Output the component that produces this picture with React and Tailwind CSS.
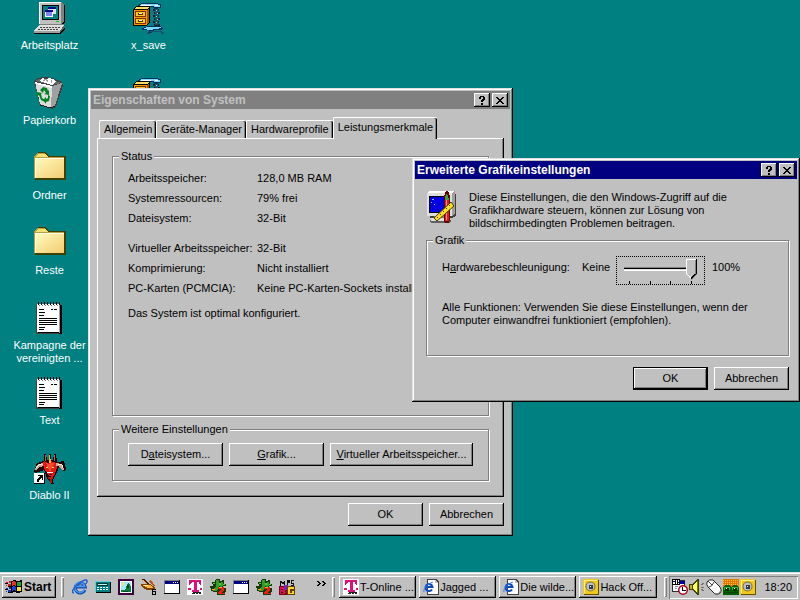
import { useState } from "react";

const raised =
  "shadow-[inset_-1px_-1px_0_#000,inset_1px_1px_0_#fff,inset_-2px_-2px_0_#808080]";
const frame =
  "shadow-[inset_-1px_-1px_0_#000,inset_1px_1px_0_#dfdfdf,inset_-2px_-2px_0_#808080,inset_2px_2px_0_#fff]";

/* ---------- icons ---------- */

function Icon({ size = 32, children }) {
  return (
    <svg
      width={size}
      height={size}
      viewBox={`0 0 ${size} ${size}`}
      shapeRendering="crispEdges"
      className="block shrink-0"
      aria-hidden="true"
    >
      {children}
    </svg>
  );
}

function ComputerIcon() {
  return (
    <Icon>
      <path d="M6 1h22l3 2v18l-4 3H6z" fill="#000" />
      <path d="M5 0h22v22H5z" fill="#c0c0c0" />
      <path d="M27 0l3 2v18l-3 2z" fill="#808080" />
      <path d="M5 0h22v1H6v21H5z" fill="#fff" />
      <path d="M8 3h17v15H8z" fill="#000" />
      <path d="M9 4h15v13H9z" fill="#008080" />
      <path d="M14 5h8v7h-8z" fill="#dfdfff" />
      <path d="M14 5h8v2h-8z" fill="#000080" />
      <path d="M11 8h8v7h-8z" fill="#fff" />
      <path d="M12 10h6v4h-6z" fill="#8080ff" />
      <path d="M11 8h8v2h-8z" fill="#000080" />
      <path d="M22 19h3v1h-3z" fill="#0c0" />
      <path d="M6 22h24v3H6z" fill="#808080" />
      <path d="M5 24h25l1 3-4 5H0v-3z" fill="#000" />
      <path d="M5 23h25l-4 6H0z" fill="#dfdfdf" />
      <path d="M0 29h26v2H0z" fill="#a0a0a0" />
      <path d="M26 29l4-6v3l-4 5z" fill="#606060" />
      <path d="M6 25.500h20M4 27.500h20" stroke="#404040" strokeDasharray="2 1" />
    </Icon>
  );
}

function ZipIcon() {
  return (
    <Icon>
      <path d="M5 3l4-2h13l6 1v4l-6 1-3-2-8 1-6-1z" fill="#003060" />
      <path d="M6 3l4-1h12l5 1v2h-5l-3-1-8 1z" fill="#80d8f8" />
      <path d="M8 3.500h10M22 3.500h3" stroke="#fff" />
      <path d="M0 7l4-3h13v16l-3 4H0z" fill="#000" />
      <path d="M1 7l3-2h12l-2 2z" fill="#ffe060" />
      <path d="M1 8h13v15H1z" fill="#ff9800" />
      <path d="M14 8l2-2v14l-2 3z" fill="#b05000" />
      <path d="M2 9h11v6H2zM2 16h11v6H2z" fill="#803000" />
      <path d="M3 10h9v4H3zM3 17h9v4H3z" fill="#ffc820" />
      <path d="M5 11h5v2H5zM5 18h5v2H5z" fill="#603000" />
      <path d="M6 11h3v1H6zM6 18h3v1H6z" fill="#fff" />
      <path d="M20 7h6v2h-6zM21 10h6v2h-6zM20 13h6v2h-6zM21 16h6v2h-6zM20 19h6v2h-6zM21 22h6v2h-6z" fill="#102838" />
      <path d="M22 7h3v16h-3z" fill="#304c60" />
      <path d="M23 8h1v1h-1zM24 11h1v1h-1zM23 14h1v1h-1zM24 17h1v1h-1zM23 20h1v1h-1z" fill="#a0e0f8" />
      <path d="M9 26l6-2h12l3 2-2 2h-7l-2 3h-4l1-3h-7z" fill="#003060" />
      <path d="M10 26l6-1h11l1 1-4 1-9 1z" fill="#80d8f8" />
      <path d="M15 29h14v1H15zM14 31h3v1h-3zM28 30h3v2h-3z" fill="#205070" />
    </Icon>
  );
}

function BinIcon() {
  return (
    <Icon>
      <path d="M0 4l3-3 7-1 9 1 9 4 1 3-7 22-4 2-12-4z" fill="#404040" />
      <path d="M1 5l17 4-1 22-11-4z" fill="#dcdcdc" />
      <path d="M18 9l10-3-7 23-4 2z" fill="#a0a0a0" />
      <path d="M1 4l4-2 13 1 9 3-9 2z" fill="#686868" />
      <path d="M5 4l3-3 4 1 3-1 4 1 3 3-4 3z" fill="#fff" />
      <path d="M9 4l3-2 2 3M17 3l1 3" fill="none" stroke="#a0a0a0" />
      <path d="M1 5l17 4v2L2 7z" fill="#fff" />
      <path d="M6 28l11 3 4-2" fill="none" stroke="#202020" />
      <g fill="#008020" shapeRendering="auto">
        <path d="M6 13l3-3 4 1 1 3 1-1 0 5-5-1 2-1-2-3-1 3z" />
        <path d="M3 15l5 1-1 1 1 4 3 2v2l-4-2-2-5-2 1z" />
        <path d="M14 18l2 1-1 5-3 1 0 2-3-4 3-3 0 2 2-1z" />
      </g>
    </Icon>
  );
}

function FolderIcon() {
  return (
    <Icon>
      <defs>
        <linearGradient id="folder" x1="0" y1="0" x2="1" y2="1">
          <stop offset="0" stopColor="#fffbc0" />
          <stop offset="1" stopColor="#f4cc70" />
        </linearGradient>
      </defs>
      <path d="M2 2l2-2h8l3 4h16l1 1v23H1V4z" fill="#404000" />
      <path d="M0 5l3-4h8l3 4h16v21H0z" fill="#b8a040" />
      <path d="M1 5l3-3h7l3 3z" fill="#f8e070" />
      <path d="M1 6h29v20H1z" fill="url(#folder)" />
      <path d="M1 6h29v1H2v19H1z" fill="#fffff0" />
    </Icon>
  );
}

function NoteIcon() {
  return (
    <Icon>
      <path d="M4 3h24v29H4z" fill="#000" />
      <path d="M3 2h23v28H3z" fill="#808080" />
      <path d="M3 2h22v28H3z" fill="#fff" />
      <path d="M2 3h1v28h22v1H2z" fill="#404040" />
      <path d="M25 3h1v28h-1z" fill="#a0a0a0" />
      <path d="M4 1.500h22" stroke="#000" strokeWidth="3" strokeDasharray="1 2" />
      <path d="M5 3.500h20" stroke="#808080" strokeDasharray="1 2" />
      <path d="M5 7h5v1H5zM17 7h2v1h-2zM20 7h3v1h-3zM5 10h6v1H5zM5 13h5v1H5zM5 16h18v1H5zM5 18h18v1H5zM5 20h18v1H5zM5 22h18v1H5zM5 25h6v1H5zM5 27h5v1H5z" fill="#000" />
    </Icon>
  );
}

function DiabloIcon() {
  return (
    <Icon>
      <path d="M10 2h2l1 6h2V2h2v6h2l1-6h2l1 8 7-1 2 8-2 2-5-4-2 5-3 6-1 3 1 4-2 2-2-5-3-4-3-8-8 3-2-1 3-9 7-2z" fill="#200000" />
      <path d="M1 17l3-5 6-1 1 3-6 1-3 4zM22 11l6 1 2 5-1 1-5-4-3 0z" fill="#c8a890" />
      <path d="M2 16l3-3 4-1M24 12l4 1 1 3" fill="none" stroke="#fff0d8" />
      <path d="M10 9l4 2 3-2 5 2 1 5-2 6-3 3-3-1-4-6-2-6z" fill="#e01818" />
      <path d="M12 11l3 1 1-1 4 0-1 4-3 5-2-4z" fill="#f84830" />
      <path d="M15 3h1v8h-1zM16 7h1v4h-1z" fill="#f0c020" />
      <path d="M11 3h1v6h-1zM20 3h1v6h-1z" fill="#c06050" />
      <path d="M12 15h2v1h-2zM18 15h2v1h-2z" fill="#ffe040" />
      <path d="M13 20h6v1h-6z" fill="#fff" />
      <path d="M15 22h3v1h-3z" fill="#800000" />
      <path d="M14 25h5v2h-1v4h-2v-4h-2z" fill="#c01010" />
      <path d="M0 21h11v11H0z" fill="#000" />
      <path d="M0 21h10v10H0z" fill="#fff" />
      <path d="M4 23h5v5H8v-2l-3 2v2H3v-3l3-3H4z" fill="#000" />
    </Icon>
  );
}

function GraphicsIcon() {
  return (
    <Icon>
      <path d="M4 1h23l3 3v21l-4 2H4z" fill="#404040" />
      <path d="M1 2l3-2h25l-3 2z" fill="#fff" />
      <path d="M1 2h25v23H1z" fill="#dfdfdf" />
      <path d="M26 2l3-2v22l-3 3z" fill="#a0a0a0" />
      <path d="M3 5h19v17H3z" fill="#000" />
      <path d="M4 6h17v15H4z" fill="#0000e0" />
      <path d="M6 8h2v1H6zM5 11h1v1H5zM8 13h1v1H8z" fill="#80c0ff" />
      <path d="M8 25h12v3H8z" fill="#808080" />
      <path d="M5 28h18l2 2-2 2H5l-2-2z" fill="#606060" />
      <path d="M5 27h17v3H5z" fill="#dfdfdf" />
      <path d="M18 5l2-5h2l2 5v24l-1 3h-4l-1-3z" fill="#600000" />
      <path d="M19 9h4v21h-4z" fill="#e02020" />
      <path d="M19 8l1-5h1l2 5v1h-4z" fill="#40a040" />
      <path d="M20 9h1v20h-1z" fill="#ff9080" />
      <g shapeRendering="auto">
        <path d="M8 27L25 11l3 4-17 15z" fill="#ffe020" stroke="#404000" />
        <path d="M11 26l1 1M14 23l1 1M17 20l1 1M20 17l1 1M23 14l1 1" stroke="#604000" />
      </g>
    </Icon>
  );
}

function FlagIcon() {
  return (
    <svg width="18" height="16" viewBox="0 0 18 16" shapeRendering="crispEdges" className="block shrink-0" aria-hidden="true">
      <path d="M6 2l3-1 3 1 5-1v12l-4 1-4-1-3 1z" fill="#000" />
      <path d="M7 3l2-1 2 1v4L9 6 7 7z" fill="#f03020" />
      <path d="M12 3l4 0v4h-4z" fill="#10b020" />
      <path d="M7 8l2-1 2 1v4l-2-1-2 1z" fill="#2040e0" />
      <path d="M12 8h4v4h-4z" fill="#ffe020" />
      <path d="M1 3h2v1H1zM4 2h2v2H4zM1 6h1v1H1zM3 5h3v2H3z" fill="#d02020" />
      <path d="M1 9h2v1H1zM4 8h2v2H4zM1 12h1v1H1zM3 11h3v2H3z" fill="#2030a0" />
      <path d="M0 4h3v1H0zM3 7h3v1H3zM0 10h3v1H0zM3 13h3v1H3z" fill="#000" />
    </svg>
  );
}

function IeIcon() {
  return (
    <Icon size={16}>
      <g fill="none" shapeRendering="auto">
        <path d="M13 11a5 5 0 1 1 .3-3H4" stroke="#1048b0" strokeWidth="3" />
        <path d="M12.500 10.500a5 5 0 1 1 .3-3H4" stroke="#4898f0" strokeWidth="1.500" />
        <path d="M2 14C-1 14 1 9 6 5S15 0 15 2s-1 2-1 3" stroke="#2060d0" strokeWidth="1.500" />
      </g>
    </Icon>
  );
}

function DialerIcon() {
  return (
    <Icon size={16}>
      <path d="M1 3h15v11H1z" fill="#000" />
      <path d="M0 2h15v11H0z" fill="#008080" />
      <path d="M0 2h15v1H1v10H0z" fill="#60d0d0" />
      <path d="M2 4h11v3H2z" fill="#003838" />
      <path d="M3 5h9v1H3z" fill="#c0f0e0" />
      <path d="M2 8.500h11M2 10.500h11" stroke="#fff" strokeDasharray="2 1" />
    </Icon>
  );
}

function PictureIcon() {
  return (
    <Icon size={16}>
      <path d="M0 0h16v16H0z" fill="#400040" />
      <path d="M2 2h12v12H2z" fill="#fff" />
      <path d="M3 3h10v10H3z" fill="#a8e8f0" />
      <path d="M3 11h3l2-1V7h1V5l2-1 2 4v5H3z" fill="#008040" />
      <path d="M9 6h2v3H9zM5 12h5v1H5z" fill="#004020" />
      <path d="M4 4h2v2H4z" fill="#ffe860" />
    </Icon>
  );
}

function BrushIcon() {
  return (
    <Icon size={16}>
      <path d="M0 0l3 0 10 9-2 2z" fill="#402000" />
      <path d="M1 1l1 0 10 8-1 1z" fill="#f0a020" />
      <path d="M0 5h9l5 3v3H6L1 8z" fill="#804000" />
      <path d="M1 6h8l4 3H7z" fill="#ffb838" />
      <path d="M3 6h4v1H3z" fill="#fff0a0" />
      <path d="M8 2l2-1 4 6-2 0z" fill="#c05020" />
      <path d="M11 10h4v1h-3v1h3v4h-4z" fill="#000" />
      <path d="M12 13h2v2h-2z" fill="#c0c0c0" />
    </Icon>
  );
}

function WindowIcon() {
  return (
    <Icon size={16}>
      <path d="M0 1h16v14H0z" fill="#000" />
      <path d="M0 1h15v13H0z" fill="#808080" />
      <path d="M1 2h14v12H1z" fill="#fff" />
      <path d="M1 2h14v3H1z" fill="#000080" />
      <path d="M9 3h1v1H9zM11 3h1v1h-1zM13 3h1v1h-1z" fill="#fff" />
    </Icon>
  );
}

function TelekomIcon() {
  return (
    <Icon size={16}>
      <path d="M0 0h16v16H0z" fill="#fff" />
      <path d="M2 1h12v5h-1l-1-3h-2v8h2v2H5v-2h2V3H5L3 6H2z" fill="#e01078" />
      <path d="M1 9h3v2H1zM13 9h2v2h-2z" fill="#e01078" />
      <path d="M6 13h8v1H6zM5 14h3v1H5zM9 14h2v1H9zM12 14h2v1h-2z" fill="#202020" />
    </Icon>
  );
}

function JaggedIcon() {
  return (
    <Icon size={16}>
      <path d="M6 0h4v2h2V1h2v4h2v2h-3v2h3v3l-2 2h1v2H7v-3H4l-3-1V9l-1 0V7h3V5H2V3h3z" fill="#183808" />
      <path d="M6 1h3v8l-3 3H3v-2l3-2zM11 3h2v3l-2 2-2-1z" fill="#30a020" />
      <path d="M3 4h2v1H3zM9 4h2v2H9zM13 5h2v1h-2z" fill="#60c840" />
      <path d="M8 8h6v3l-3 3h4v1H8v-2l3-3H8z" fill="#e82010" />
      <path d="M9 8h3v1H9zM2 10h3v1H2z" fill="#ffa020" />
    </Icon>
  );
}

function MagicIcon() {
  return (
    <Icon size={16}>
      <path d="M1 2h1v5H1zM2 1l2 3 2-3v6H5V4L4 6 2 4zM8 1h3v3H9v3H8zM12 1h3v1h-2v2h2v3h-3V6h2V5h-2z" fill="#101010" />
      <path d="M0 7h8v9H0z" fill="#800020" />
      <path d="M1 8h4l2 2-2 2 2 2-2 1H1z" fill="#d01050" />
      <path d="M5 6h4v5H5z" fill="#8020c0" />
      <path d="M8 7h8v9H8z" fill="#604000" />
      <path d="M9 8h6v2h-4v4h2v-2h2v3H9z" fill="#ffd820" />
      <path d="M2 10h2v1H2zM2 13h2v1H2z" fill="#200010" />
    </Icon>
  );
}

function PageIcon() {
  return (
    <Icon size={16}>
      <path d="M4 0h9l3 3v13H4z" fill="#404040" />
      <path d="M5 1h7v3h3v11H5z" fill="#fff" />
      <path d="M12 1l3 3h-3z" fill="#c0c0c0" />
      <g fill="none" shapeRendering="auto">
        <path d="M9 10.500A3.500 3.500 0 1 1 9.500 8H3" stroke="#1048c0" strokeWidth="2" />
        <path d="M1 13c-1-3 3-8 9-10" stroke="#3080e0" />
      </g>
    </Icon>
  );
}

function EyeIcon() {
  return (
    <Icon size={16}>
      <path d="M1 1h15v15H1z" fill="#605000" />
      <path d="M0 0h15v15H0z" fill="#f0c820" />
      <path d="M1 1h13v1H2v12H1z" fill="#fff080" />
      <circle cx="7.500" cy="7.500" r="5" fill="#807020" shapeRendering="auto" />
      <circle cx="7.500" cy="7.500" r="4" fill="#b8c0c8" shapeRendering="auto" />
      <path d="M6 6h4v4H6z" fill="#303848" />
      <path d="M7 7h1v1H7z" fill="#fff" />
    </Icon>
  );
}

function SchedulerIcon() {
  return (
    <Icon size={16}>
      <path d="M0 1h13v12H0z" fill="#303030" />
      <path d="M1 5h11v7H1z" fill="#fff" />
      <path d="M8 2h5v3H8z" fill="#0000a0" />
      <path d="M0 0h8v6H0z" fill="#000" />
      <path d="M1 1h2v1H1zM4 1h1v4H4zM6 1h1v2H6zM1 3h2v2H1zM6 4h1v1H6z" fill="#fff" />
      <path d="M3 7h3v1H3zM3 9h2v1H3z" fill="#8080c0" />
      <circle cx="11" cy="11" r="5" fill="#b00020" shapeRendering="auto" />
      <circle cx="11" cy="11" r="3.500" fill="#fff" shapeRendering="auto" />
      <path d="M10 8h1v3h3v1h-4z" fill="#000" />
    </Icon>
  );
}

function SpeakerIcon() {
  return (
    <Icon size={16}>
      <path d="M0 5h3l5-5h2v16H8l-5-5H0z" fill="#404000" />
      <path d="M1 6h2v4H1z" fill="#c0b020" />
      <path d="M4 6l4-4v12l-4-4z" fill="#ffff60" />
      <path d="M8 2h1v12H8z" fill="#808000" />
      <path d="M12 6l3-2M12 8.500h3M12 10l3 2" stroke="#707070" fill="none" />
    </Icon>
  );
}

function MouseIcon() {
  return (
    <Icon size={16}>
      <g shapeRendering="auto">
        <path d="M1 3Q3 0 7 1l7 7q3 4 0 6-4 3-7-1L2 8Q0 5 1 3z" fill="#fff" stroke="#202020" />
        <path d="M3 8q3 0 5-5M2 2l4 4" fill="none" stroke="#404040" />
        <path d="M10 15q4 0 5-4" fill="none" stroke="#808080" />
      </g>
    </Icon>
  );
}

function FrogIcon() {
  return (
    <Icon size={16}>
      <path d="M0 0h16v16H0z" fill="#e07800" />
      <path d="M0 1.500h16M0 3.500h16M0 5.500h16" stroke="#ffc040" strokeDasharray="1 1" />
      <path d="M0 9l2-3h4l2 2 2-2h4l2 3v7H0z" fill="#006000" />
      <path d="M1 8h6v3H1zM9 8h6v3H9z" fill="#40b040" />
      <path d="M2 9h4v3H2zM10 9h4v3h-4z" fill="#003000" />
      <path d="M3 9h1v1H3zM11 9h1v1h-1z" fill="#fff" />
      <path d="M1 13h14v1H1z" fill="#104010" />
    </Icon>
  );
}

/* ---------- controls ---------- */

function Button({ children, className = "", isDefault = false, ...props }) {
  const edge = isDefault ? `border border-black ${raised}` : raised;
  return (
    <button type="button" className={`h-[23px] bg-[#c0c0c0] text-center whitespace-nowrap ${edge} ${className}`} {...props}>
      {children}
    </button>
  );
}

function TitleBar({ title, active = false }) {
  return (
    <div className={`h-[18px] flex items-center gap-[2px] px-[2px] ${active ? "bg-[#000080] text-white" : "bg-[#808080] text-[#c0c0c0]"}`}>
      <h2 className="flex-1 text-[12px] font-bold whitespace-nowrap">{title}</h2>
      <button type="button" aria-label="Hilfe" className={`w-4 h-[14px] bg-[#c0c0c0] flex items-center justify-center ${raised}`}>
        <svg width="8" height="9" viewBox="0 0 8 9" shapeRendering="crispEdges">
          <path d="M2 0h4v1h1v3H6v1H5v1H3V4h1V3h1V1H3v2H1V1h1zM3 7h2v2H3z" fill="#000" />
        </svg>
      </button>
      <button type="button" aria-label="Schließen" className={`w-4 h-[14px] bg-[#c0c0c0] flex items-center justify-center ${raised}`}>
        <svg width="8" height="7" viewBox="0 0 8 7" shapeRendering="crispEdges">
          <path d="M0 0h2v1h1v1h2V1h1V0h2v1H7v1H6v1H5v1h1v1h1v1h1v1H6V6H5V5H3v1H2v1H0V6h1V5h1V4h1V3H2V2H1V1H0z" fill="#000" />
        </svg>
      </button>
    </div>
  );
}

function GroupBox({ legend, className = "", children }) {
  return (
    <fieldset className={`min-w-0 border border-[#808080] px-[15px] shadow-[1px_1px_0_#fff,inset_1px_1px_0_#fff] ${className}`}>
      <legend className="bg-[#c0c0c0] px-[2px] -ml-[9px]">{legend}</legend>
      {children}
    </fieldset>
  );
}

/* ---------- desktop ---------- */

const shortcuts = [
  { label: "Arbeitsplatz", icon: ComputerIcon },
  { label: "Papierkorb", icon: BinIcon },
  { label: "Ordner", icon: FolderIcon },
  { label: "Reste", icon: FolderIcon },
  { label: "Kampagne der vereinigten ...", icon: NoteIcon },
  { label: "Text", icon: NoteIcon },
  { label: "Diablo II", icon: DiabloIcon },
  { label: "x_save", icon: ZipIcon },
  { icon: ZipIcon },
];

function Desktop() {
  return (
    <main className="flex-1 grid grid-flow-col grid-rows-[repeat(7,75px)] auto-cols-[99px] justify-start pt-[2px]">
      {shortcuts.map(({ label, icon: Glyph }, i) => (
        <a key={i} href="#" className="flex flex-col items-center gap-[5px] text-white text-center cursor-default">
          <Glyph />
          {label && <span className="w-[78px]">{label}</span>}
        </a>
      ))}
    </main>
  );
}

const status = [
  [
    ["Arbeitsspeicher:", "128,0 MB RAM"],
    ["Systemressourcen:", "79% frei"],
    ["Dateisystem:", "32-Bit"],
  ],
  [
    ["Virtueller Arbeitsspeicher:", "32-Bit"],
    ["Komprimierung:", "Nicht installiert"],
    ["PC-Karten (PCMCIA):", "Keine PC-Karten-Sockets installiert"],
  ],
];

const tabs = ["Allgemein", "Geräte-Manager", "Hardwareprofile", "Leistungsmerkmale"];

function SystemWindow() {
  const [tab, setTab] = useState("Leistungsmerkmale");
  return (
    <section className={`absolute left-[88px] top-[88px] w-[425px] bg-[#c0c0c0] p-[3px] ${frame}`}>
      <TitleBar title="Eigenschaften von System" />
      <div className="px-[6px] pt-2 pb-[7px]">
        <div role="tablist" className="flex items-end pl-[2px]">
          {tabs.map((name) => (
            <button
              key={name}
              type="button"
              role="tab"
              aria-selected={tab === name}
              onClick={() => setTab(name)}
              className={`rounded-t-[2px] bg-[#c0c0c0] border-l border-t border-white px-1 whitespace-nowrap shadow-[inset_-1px_0_0_#000,inset_-2px_0_0_#808080] ${
                tab === name ? "relative z-10 h-[22px] -mb-px pb-[2px]" : "h-[18px]"
              }`}
            >
              {name}
            </button>
          ))}
        </div>
        <div className={`px-[15px] pt-3 pb-4 ${raised}`}>
          <GroupBox legend="Status" className="min-h-[266px] pt-[9px]">
            {status.map((rows, i) => (
              <dl key={i} className="grid grid-cols-[129px_1fr] gap-y-[7px] mb-[17px] last-of-type:mb-3 whitespace-nowrap">
                {rows.map(([name, value]) => (
                  <div key={name} className="contents">
                    <dt>{name}</dt>
                    <dd>{value}</dd>
                  </div>
                ))}
              </dl>
            ))}
            <p>Das System ist optimal konfiguriert.</p>
          </GroupBox>
          <GroupBox legend="Weitere Einstellungen" className="mt-[7px] pt-[7px] pb-[14px]">
            <div className="flex gap-[6px]">
              <Button className="w-[95px]">D<u>a</u>teisystem...</Button>
              <Button className="w-[95px]"><u>G</u>rafik...</Button>
              <Button className="w-[143px]"><u>V</u>irtueller Arbeitsspeicher...</Button>
            </div>
          </GroupBox>
        </div>
        <div className="flex justify-end gap-[6px] mt-[6px]">
          <Button className="w-[75px]">OK</Button>
          <Button className="w-[75px]">Abbrechen</Button>
        </div>
      </div>
    </section>
  );
}

const sliderTrack =
  "[&::-webkit-slider-runnable-track]:h-[4px] [&::-webkit-slider-runnable-track]:bg-[linear-gradient(#808080_0_1px,#000_1px_2px,#dfdfdf_2px_3px,#fff_3px)]";
const sliderThumb =
  "[&::-webkit-slider-thumb]:appearance-none [&::-webkit-slider-thumb]:w-[11px] [&::-webkit-slider-thumb]:h-[21px] [&::-webkit-slider-thumb]:-mt-[8px] [&::-webkit-slider-thumb]:[clip-path:polygon(0_0,100%_0,100%_15px,50%_100%,0_15px)] [&::-webkit-slider-thumb]:[background:linear-gradient(to_bottom_right,#c0c0c0_0_30%,#000_30%)_100%_100%/6px_6px_no-repeat,linear-gradient(to_bottom_left,#c0c0c0_0_30%,#fff_30%)_0_100%/5px_6px_no-repeat,linear-gradient(#fff,#fff)_0_0/10px_1px_no-repeat,linear-gradient(90deg,#fff_0_1px,#c0c0c0_1px_9px,#808080_9px_10px,#000_10px)]";

function GraphicsDialog() {
  const [level, setLevel] = useState(3);
  return (
    <section className={`absolute left-[412px] top-[158px] w-[388px] bg-[#c0c0c0] p-[3px] ${frame}`}>
      <TitleBar title="Erweiterte Grafikeinstellungen" active />
      <div className="pl-[11px] pr-2 pt-3 pb-[9px]">
        <div className="flex gap-[11px]">
          <GraphicsIcon />
          <p className="w-[270px]">
            Diese Einstellungen, die den Windows-Zugriff auf die
            <br />
            Grafikhardware steuern, können zur Lösung von
            <br />
            bildschirmbedingten Problemen beitragen.
          </p>
        </div>
        <GroupBox legend="Grafik" className="mt-1 pt-[9px] min-h-[122px]">
          <div className="flex items-start leading-[22px]">
            <label htmlFor="accel" className="w-[140px] whitespace-nowrap">
              H<u>a</u>rdwarebeschleunigung:
            </label>
            <span className="w-[34px]">Keine</span>
            <div className="w-[89px] h-[29px] border border-dotted border-black px-[7px] pt-px">
              <input
                id="accel"
                type="range"
                min="0"
                max="3"
                value={level}
                onChange={(e) => setLevel(+e.target.value)}
                className={`block w-full h-[21px] appearance-none bg-transparent outline-none ${sliderTrack} ${sliderThumb}`}
              />
              <div className="flex justify-between px-[5px] pt-[2px]">
                <i className="w-px h-[3px] bg-black" />
                <i className="w-px h-[3px] bg-black" />
                <i className="w-px h-[3px] bg-black" />
                <i className="w-px h-[3px] bg-black" />
              </div>
            </div>
            <span className="pl-[7px]">100%</span>
          </div>
          <p className="mt-4">
            Alle Funktionen: Verwenden Sie diese Einstellungen, wenn der
            <br />
            Computer einwandfrei funktioniert (empfohlen).
          </p>
        </GroupBox>
        <div className="flex justify-end gap-[6px] mt-[11px]">
          <Button className="w-[75px]" isDefault>OK</Button>
          <Button className="w-[75px]">Abbrechen</Button>
        </div>
      </div>
    </section>
  );
}

/* ---------- taskbar ---------- */

const quickLaunch = [
  ["Internet Explorer", IeIcon],
  ["Wählhilfe", DialerIcon],
  ["Bilder", PictureIcon],
  ["Malen", BrushIcon],
  ["Fenster", WindowIcon],
  ["T-Online", TelekomIcon],
  ["Jagged Alliance 2", JaggedIcon],
  ["Programm", WindowIcon],
  ["Jagged Alliance 2", JaggedIcon],
  ["Magic", MagicIcon],
];

const tasks = [
  ["T-Online ...", TelekomIcon],
  ["Jagged ...", PageIcon],
  ["Die wilde...", PageIcon],
  ["Hack Off...", EyeIcon],
];

function Grip() {
  return <span className="w-[3px] h-5 shrink-0 shadow-[inset_1px_1px_0_#fff,inset_-1px_-1px_0_#808080]" />;
}

function Taskbar() {
  return (
    <footer className="h-7 bg-[#c0c0c0] shadow-[inset_0_1px_0_#dfdfdf,inset_0_2px_0_#fff] flex items-center pt-[3px] pb-px px-[2px]">
      <button type="button" className={`h-[22px] w-[54px] flex items-center gap-px pl-[3px] text-[12px] font-bold bg-[#c0c0c0] ${raised}`}>
        <FlagIcon />
        Start
      </button>
      <div className="flex items-center pl-[5px]">
        <Grip />
        <div className="flex gap-[7px] pl-2">
          {quickLaunch.map(([name, Glyph], i) => (
            <button key={i} type="button" aria-label={name}>
              <Glyph />
            </button>
          ))}
        </div>
        <button type="button" aria-label="Weitere Symbole" className="pl-[22px] pr-[6px] pb-2">
          <svg width="9" height="5" viewBox="0 0 9 5" shapeRendering="crispEdges" className="block">
            <path d="M0 0h2v1h1v1h1v1H3v1H2v1H0V4h1V3h1V2H1V1H0zM5 0h2v1h1v1h1v1H8v1H7v1H5V4h1V3h1V2H6V1H5z" fill="#000" />
          </svg>
        </button>
        <Grip />
      </div>
      <div className="flex-1 flex gap-[3px] pl-1 pr-2 min-w-0">
        {tasks.map(([name, Glyph]) => (
          <button key={name} type="button" className={`flex-1 min-w-0 h-[22px] flex items-center gap-px pl-1 bg-[#c0c0c0] whitespace-nowrap ${raised}`}>
            <Glyph />
            {name}
          </button>
        ))}
      </div>
      <Grip />
      <div className="h-[23px] flex items-center gap-px ml-[2px] pl-[3px] pr-[6px] shadow-[inset_1px_1px_0_#808080,inset_-1px_-1px_0_#fff]">
        <SchedulerIcon />
        <SpeakerIcon />
        <MouseIcon />
        <FrogIcon />
        <EyeIcon />
        <time className="pl-[7px]">18:20</time>
      </div>
    </footer>
  );
}

export default function App() {
  return (
    <div className="relative min-h-screen overflow-hidden flex flex-col bg-[#008080] text-black text-[11px] leading-[13px] font-['Liberation_Sans',Arial,sans-serif]">
      <Desktop />
      <SystemWindow />
      <GraphicsDialog />
      <Taskbar />
    </div>
  );
}
